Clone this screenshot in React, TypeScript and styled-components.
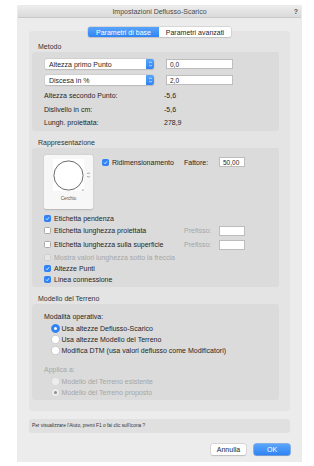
import React from "react";
import styled, { createGlobalStyle } from "styled-components";

const GlobalStyle = createGlobalStyle`
    html, body {
        margin: 0;
        padding: 0;
        background: #ffffff;
    }
    body {
        font-family: "Liberation Sans", Arial, sans-serif;
        font-size: 7px;
        color: #262626;
    }
`;

const BLUE = "#2f83f4";

// =============================================================================
// DIALOG FRAME
// =============================================================================
const Dialog = styled.div`
    margin: 6px 0 0 18px;
    width: 283px;
    height: 456px;
    background: #ececec;
    display: flex;
    flex-direction: column;
    box-shadow: 0 0 0 0.5px #d6d6d6;
`;

const TitleBar = styled.div`
    height: 11px;
    display: grid;
    grid-template-columns: 1fr auto 1fr;
    align-items: center;
    background: linear-gradient(#ececec, #dadada);
    border-bottom: 1px solid #c9c9c9;
    color: #4a4a4a;
    font-size: 7px;
`;

const HelpMark = styled.span`
    justify-self: end;
    padding-right: 3px;
    font-weight: bold;
    color: #555;
`;

const Body = styled.div`
    padding: 0 11px;
    display: flex;
    flex-direction: column;
`;

// =============================================================================
// TABS
// =============================================================================
const TabBar = styled.div`
    align-self: center;
    margin-top: 9px;
    display: flex;
    height: 10px;
    position: relative;
    z-index: 1;
    border-radius: 2px;
    box-shadow: 0 0 0 0.5px #c4c4c4, 0 0.5px 1px rgba(0, 0, 0, 0.15);
`;

const Tab = styled.div<{ $active?: boolean }>`
    width: ${(p) => (p.$active ? 71 : 72)}px;
    display: flex;
    align-items: center;
    justify-content: center;
    font-size: 7px;
    border-radius: ${(p) => (p.$active ? "2px 0 0 2px" : "0 2px 2px 0")};
    background: ${(p) => (p.$active ? `linear-gradient(#5aa5fa, ${BLUE})` : "#ffffff")};
    color: ${(p) => (p.$active ? "#ffffff" : "#262626")};
`;

const Panel = styled.div`
    margin-top: -6px;
    background: #e4e4e4;
    border-radius: 3px;
    padding: 12px 11px 11px 3px;
`;

const SectionLabel = styled.div<{ $first?: boolean }>`
    line-height: 8px;
    height: 8px;
    margin: ${(p) => (p.$first ? 0 : 8)}px 0 1px 6px;
    color: #333;
`;

const Group = styled.div<{ $pad: string }>`
    background: #dbdbdb;
    border-radius: 3px;
    padding: ${(p) => p.$pad};
`;

// =============================================================================
// CONTROLS
// =============================================================================
const FieldRow = styled.div<{ $gapTop?: number }>`
    display: flex;
    gap: 12px;
    height: 10px;
    margin-top: ${(p) => p.$gapTop || 0}px;
`;

const PopupBox = styled.div`
    width: 109px;
    display: flex;
    align-items: center;
    background: #ffffff;
    border-radius: 2px;
    box-shadow: 0 0 0 0.5px #c8c8c8, 0 0.5px 1px rgba(0, 0, 0, 0.2);
    overflow: hidden;
`;

const PopupText = styled.span`
    flex: 1;
    padding-left: 4px;
    white-space: nowrap;
`;

const PopupArrows = styled.span`
    width: 8px;
    height: 100%;
    background: linear-gradient(#5aa5fa, ${BLUE});
    display: flex;
    align-items: center;
    justify-content: center;
`;

const TextInput = styled.div<{ $w: number }>`
    width: ${(p) => p.$w}px;
    height: 10px;
    box-sizing: border-box;
    background: #ffffff;
    border: 0.5px solid #bdbdbd;
    padding-left: 3px;
    display: flex;
    align-items: center;
    font-size: 6.5px;
`;

const InfoRow = styled.div<{ $first?: boolean }>`
    display: grid;
    grid-template-columns: 120px auto;
    height: 13.5px;
    align-items: center;
    margin-top: ${(p) => (p.$first ? 4 : 0)}px;
    margin-left: -1px;
`;

const Box = styled.span<{ $checked?: boolean; $disabled?: boolean }>`
    width: 7px;
    height: 7px;
    box-sizing: border-box;
    border-radius: 1.5px;
    flex: none;
    display: flex;
    align-items: center;
    justify-content: center;
    background: ${(p) => (p.$checked ? BLUE : p.$disabled ? "#e6e6e6" : "#ffffff")};
    border: 0.5px solid ${(p) => (p.$checked ? BLUE : p.$disabled ? "#cfcfcf" : "#a9a9a9")};
`;

const CheckRow = styled.div<{ $h: number; $disabled?: boolean }>`
    display: flex;
    align-items: center;
    height: ${(p) => p.$h}px;
    color: ${(p) => (p.$disabled ? "#a6a6a6" : "#262626")};
`;

const CheckLabel = styled.label<{ $w?: number }>`
    display: flex;
    align-items: center;
    gap: 3px;
    width: ${(p) => (p.$w ? `${p.$w}px` : "auto")};
    white-space: nowrap;
`;

const SideLabel = styled.span<{ $muted?: boolean }>`
    width: 35px;
    color: ${(p) => (p.$muted ? "#a6a6a6" : "#262626")};
`;

const Check = ({ checked, disabled }: { checked?: boolean; disabled?: boolean }) => (
    <Box $checked={checked} $disabled={disabled}>
        {checked && (
            <svg width="5" height="5" viewBox="0 0 10 10">
                <path d="M2 5.2 L4.2 7.5 L8 2.5" fill="none" stroke="#fff" strokeWidth="1.6" />
            </svg>
        )}
    </Box>
);

const Radio = ({ selected, disabled }: { selected?: boolean; disabled?: boolean }) => {
    const fill = selected && !disabled ? BLUE : disabled ? "#ececec" : "#ffffff";
    const stroke = selected && !disabled ? BLUE : disabled ? "#c9c9c9" : "#a9a9a9";
    return (
        <svg width="9" height="9" viewBox="0 0 18 18">
            <circle cx="9" cy="9" r="8.3" fill={fill} stroke={stroke} strokeWidth="1" />
            {selected && <circle cx="9" cy="9" r="3" fill={disabled ? "#8e8e8e" : "#ffffff"} />}
        </svg>
    );
};

const RadioRow = styled.div<{ $h: number; $disabled?: boolean }>`
    display: flex;
    align-items: center;
    gap: 1.5px;
    height: ${(p) => p.$h}px;
    margin-left: 7px;
    color: ${(p) => (p.$disabled ? "#a6a6a6" : "#262626")};
    white-space: nowrap;
`;

const PlainLabel = styled.div<{ $muted?: boolean; $top: number }>`
    height: 9px;
    line-height: 9px;
    margin-top: ${(p) => p.$top}px;
    color: ${(p) => (p.$muted ? "#a6a6a6" : "#262626")};
`;

// =============================================================================
// PREVIEW
// =============================================================================
const TopRow = styled.div`
    display: flex;
    gap: 9px;
`;

const Preview = styled.div`
    width: 49px;
    height: 54px;
    box-sizing: border-box;
    background: #f7f7f7;
    border-radius: 2px;
    box-shadow: 0 0.5px 1.5px rgba(0, 0, 0, 0.18);
    display: flex;
    flex-direction: column;
    align-items: center;
    padding-top: 4px;
    position: relative;
`;

const PreviewImage = styled.div`
    display: flex;
    align-items: center;
    gap: 2px;
    margin-left: 7px;
`;

const ImageArea = styled.div`
    width: 31px;
    height: 32px;
    background: #ffffff;
    display: flex;
    align-items: center;
    justify-content: center;
`;

const Caption = styled.div`
    font-size: 4.5px;
    color: #555;
    margin-top: 5px;
`;

const TinyMark = styled.span`
    position: absolute;
    left: 38px;
    top: 32px;
    font-size: 4px;
    color: #555;
`;

const ScaleRow = styled.div`
    display: flex;
    align-items: center;
    height: 10px;
    margin-top: 2px;
`;

// =============================================================================
// FOOTER
// =============================================================================
const HelpBar = styled.div`
    margin-top: 8px;
    height: 14px;
    background: #e0e0e0;
    border-radius: 3px;
    display: flex;
    align-items: center;
    padding-left: 3px;
    font-size: 4.8px;
    color: #333;
`;

const Buttons = styled.div`
    margin-top: 11px;
    display: flex;
    justify-content: flex-end;
    gap: 8px;
`;

const Button = styled.div<{ $primary?: boolean }>`
    width: ${(p) => (p.$primary ? 36 : 35)}px;
    height: 11px;
    border-radius: 2px;
    display: flex;
    align-items: center;
    justify-content: center;
    font-size: 7px;
    background: ${(p) => (p.$primary ? `linear-gradient(#5aa5fa, ${BLUE})` : "#ffffff")};
    color: ${(p) => (p.$primary ? "#ffffff" : "#262626")};
    box-shadow: 0 0 0 0.5px ${(p) => (p.$primary ? "#2a78e4" : "#c4c4c4")}, 0 0.5px 1px rgba(0, 0, 0, 0.2);
`;

const Arrows = ({ color }: { color: string }) => (
    <svg width="5" height="8" viewBox="0 0 10 16">
        <path d="M2.5 6 L5 3.5 L7.5 6 M2.5 10 L5 12.5 L7.5 10" fill="none" stroke={color} strokeWidth="1.4" />
    </svg>
);

const Popup = ({ text }: { text: string }) => (
    <PopupBox>
        <PopupText>{text}</PopupText>
        <PopupArrows>
            <Arrows color="#ffffff" />
        </PopupArrows>
    </PopupBox>
);

export default function App() {
    return (
        <>
            <GlobalStyle />
            <Dialog>
                <TitleBar>
                    <span />
                    <span>Impostazioni Deflusso-Scarico</span>
                    <HelpMark>?</HelpMark>
                </TitleBar>
                <Body>
                    <TabBar>
                        <Tab $active>Parametri di base</Tab>
                        <Tab>Parametri avanzati</Tab>
                    </TabBar>
                    <Panel>
                        <SectionLabel $first>Metodo</SectionLabel>
                        <Group $pad="7px 0 1.5px 13px">
                            <FieldRow>
                                <Popup text="Altezza primo Punto" />
                                <TextInput $w={67}>0,0</TextInput>
                            </FieldRow>
                            <FieldRow $gapTop={6}>
                                <Popup text="Discesa in %" />
                                <TextInput $w={67}>2,0</TextInput>
                            </FieldRow>
                            <InfoRow $first>
                                <span>Altezza secondo Punto:</span>
                                <span>-5,6</span>
                            </InfoRow>
                            <InfoRow>
                                <span>Dislivello in cm:</span>
                                <span>-5,6</span>
                            </InfoRow>
                            <InfoRow>
                                <span>Lungh. proiettata:</span>
                                <span>278,9</span>
                            </InfoRow>
                        </Group>

                        <SectionLabel>Rappresentazione</SectionLabel>
                        <Group $pad="7px 0 2px 12px">
                            <TopRow>
                                <Preview>
                                    <PreviewImage>
                                        <ImageArea>
                                            <svg width="31" height="31" viewBox="0 0 31 31">
                                                <circle cx="15.5" cy="15.5" r="14.6" fill="none" stroke="#2b2b2b" strokeWidth="0.7" />
                                            </svg>
                                        </ImageArea>
                                        <Arrows color="#777" />
                                    </PreviewImage>
                                    <TinyMark>c</TinyMark>
                                    <Caption>Cerchio</Caption>
                                </Preview>
                                <ScaleRow>
                                    <CheckLabel $w={82}>
                                        <Check checked />
                                        Ridimensionamento
                                    </CheckLabel>
                                    <SideLabel>Fattore:</SideLabel>
                                    <TextInput $w={26}>50,00</TextInput>
                                </ScaleRow>
                            </TopRow>
                            <div style={{ height: 3.5 }} />
                            <CheckRow $h={11}>
                                <CheckLabel>
                                    <Check checked />
                                    Etichetta pendenza
                                </CheckLabel>
                            </CheckRow>
                            <CheckRow $h={14}>
                                <CheckLabel $w={140}>
                                    <Check />
                                    Etichetta lunghezza proiettata
                                </CheckLabel>
                                <SideLabel $muted>Prefisso:</SideLabel>
                                <TextInput $w={26} />
                            </CheckRow>
                            <CheckRow $h={14}>
                                <CheckLabel $w={140}>
                                    <Check />
                                    Etichetta lunghezza sulla superficie
                                </CheckLabel>
                                <SideLabel $muted>Prefisso:</SideLabel>
                                <TextInput $w={26} />
                            </CheckRow>
                            <CheckRow $h={11} $disabled>
                                <CheckLabel>
                                    <Check disabled />
                                    Mostra valori lunghezza sotto la freccia
                                </CheckLabel>
                            </CheckRow>
                            <CheckRow $h={11}>
                                <CheckLabel>
                                    <Check checked />
                                    Altezze Punti
                                </CheckLabel>
                            </CheckRow>
                            <CheckRow $h={11}>
                                <CheckLabel>
                                    <Check checked />
                                    Linea connessione
                                </CheckLabel>
                            </CheckRow>
                        </Group>

                        <SectionLabel>Modello del Terreno</SectionLabel>
                        <Group $pad="8.5px 0 2.5px 12px">
                            <PlainLabel $top={0}>Modalità operativa:</PlainLabel>
                            <div style={{ height: 2 }} />
                            <RadioRow $h={11}>
                                <Radio selected />
                                Usa altezze Deflusso-Scarico
                            </RadioRow>
                            <RadioRow $h={11}>
                                <Radio />
                                Usa altezze Modello del Terreno
                            </RadioRow>
                            <RadioRow $h={11}>
                                <Radio />
                                Modifica DTM (usa valori deflusso come Modificatori)
                            </RadioRow>
                            <PlainLabel $muted $top={9}>
                                Applica a:
                            </PlainLabel>
                            <div style={{ height: 2 }} />
                            <RadioRow $h={11} $disabled>
                                <Radio disabled />
                                Modello del Terreno esistente
                            </RadioRow>
                            <RadioRow $h={10} $disabled>
                                <Radio disabled selected />
                                Modello del Terreno proposto
                            </RadioRow>
                        </Group>
                    </Panel>
                    <HelpBar>Per visualizzare l'Aiuto, premi F1 o fai clic sull'icona ?</HelpBar>
                    <Buttons>
                        <Button>Annulla</Button>
                        <Button $primary>OK</Button>
                    </Buttons>
                </Body>
            </Dialog>
        </>
    );
}
